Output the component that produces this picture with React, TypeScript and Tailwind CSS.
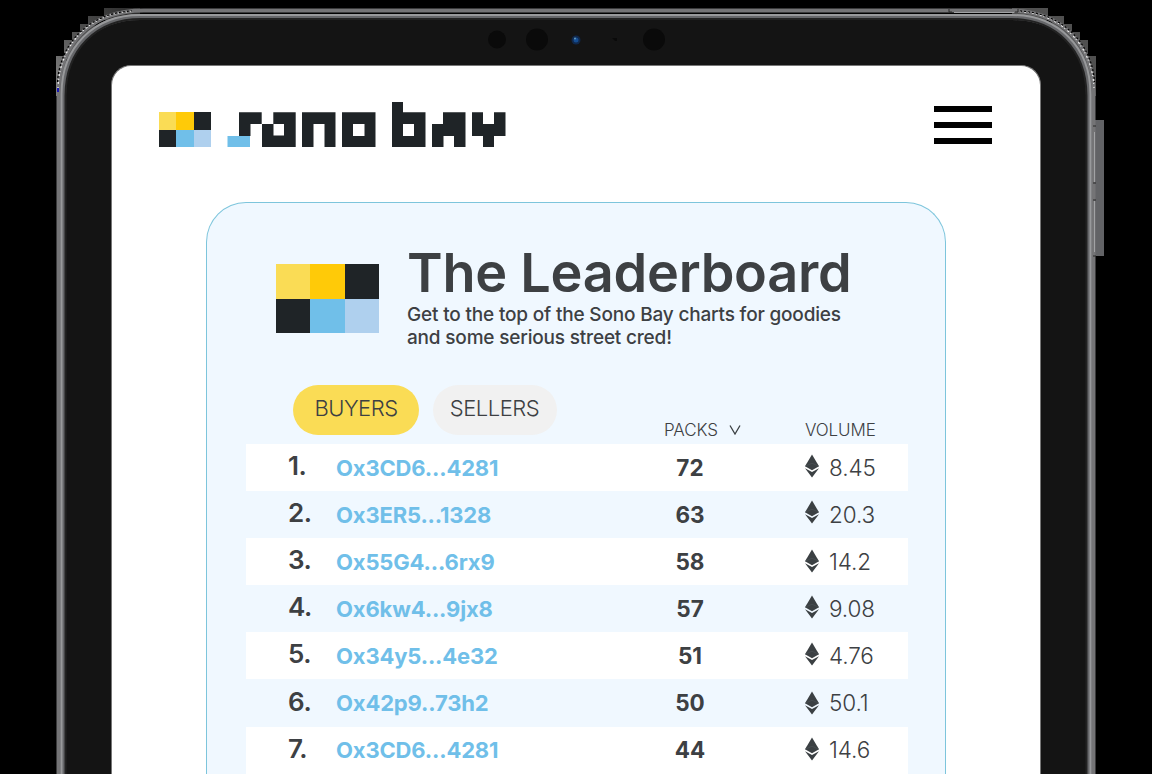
const rows = [
  { rank: "1.", address: "Ox3CD6...4281", packs: "72", volume: "8.45", iconShift: "mt-[-3px]" },
  { rank: "2.", address: "Ox3ER5...1328", packs: "63", volume: "20.3", iconShift: "mt-[-5px]" },
  { rank: "3.", address: "Ox55G4...6rx9", packs: "58", volume: "14.2", iconShift: "mt-[-1px]" },
  { rank: "4.", address: "Ox6kw4...9jx8", packs: "57", volume: "9.08", iconShift: "mt-[-3px]" },
  { rank: "5.", address: "Ox34y5...4e32", packs: "51", volume: "4.76", iconShift: "mt-[-4px]" },
  { rank: "6.", address: "Ox42p9..73h2", packs: "50", volume: "50.1", iconShift: "mt-0" },
  { rank: "7.", address: "Ox3CD6...4281", packs: "44", volume: "14.6", iconShift: "mt-[-2px]" },
];

function Mark({ className }: { className: string }) {
  return (
    <div className={`grid shrink-0 grid-cols-3 grid-rows-2 ${className}`}>
      <div className="bg-[#fadc55]" />
      <div className="bg-[#ffca08]" />
      <div className="bg-[#1f2427]" />
      <div className="bg-[#1f2427]" />
      <div className="bg-[#70bfe9]" />
      <div className="bg-[#afd0ee]" />
    </div>
  );
}

function Wordmark() {
  return (
    <svg className="ml-4 shrink-0" width="280" height="46" viewBox="0 0 280 46">
      <g fill="#1f2427" fillRule="evenodd">
        <path d="M12 10.3H34.700V22H23.500V34H12ZM34.700 22H46.300V10.3H68.700V45H35V22ZM46.500 22V33.500H57V22Z" />
        <path d="M75 10.3H108.500V45H97.500V22H86.500V45H75Z" />
        <path d="M115 10.300H148.500V45H115ZM126 22V34H137.500V22Z" />
        <path d="M165 0H176V10.300H198.500V45H165ZM176 22V34H187V22Z" />
        <path d="M216 10.300H238.500V45H227V34H216.500V45H205V22H216Z" />
        <path d="M245 10.300H256V22H267V10.300H278.500V34H267V45H256V34H245Z" />
      </g>
      <path fill="#70bfe9" d="M.500 34H23V45H.500Z" />
    </svg>
  );
}

function Ether() {
  return (
    <svg className="block" width="14" height="24" viewBox="0 0 14 24" fill="#3b4043">
      <path d="M7 .5 14 12.300 7 16.300 0 12.300Z" />
      <path d="M0 14.200 7 18 14 14.200 7 23.500Z" />
      <path d="M0 12.300 7 9.200 14 12.300" fill="none" stroke="#596065" strokeWidth=".4" />
    </svg>
  );
}

function DeviceEdge() {
  return (
    <svg className="pointer-events-none absolute left-0 top-0" width="1152" height="774" viewBox="0 0 1152 774">
      <defs>
        <linearGradient id="left-edge" x1="0" x2="1" y1="1" y2="0">
          <stop stopColor="#888" />
          <stop offset=".5" stopColor="#505050" />
          <stop offset="1" stopColor="#292929" />
        </linearGradient>
      </defs>
      <path fill="url(#left-edge)" d="M56 96V56H64V40H72V32H80V24H88V16H104V8H140V20H100L66 60V96Z" />
      <path fill="#505050" d="M1012 8H1048V16H1064V24H1072V32H1080V40H1088V56H1096V96H1080V60L1050 20H1012Z" />
      <path fill="#626366" d="M1095 120H1104V256H1095Z" />
      <path fill="none" stroke="#747476" strokeWidth="4" d="M58.500 774V94C58.500 44 90 10.500 144 10.500H1008C1062 10.500 1093.500 44 1093.500 94V774" />
      <path fill="#141414" stroke="#66676a" strokeWidth="6" d="M63 777V95C63 48 95 17 140 17H1012C1058 17 1089 48 1089 95V777Z" />
      <path fill="none" stroke="#98999b" strokeWidth="2" d="M61.500 774V94C61.500 47 94 15 140 15H1012C1058 15 1090.500 47 1090.500 94V774" />
      <path fill="none" stroke="#222" strokeWidth="2" d="M65.500 774V96C65.500 50 96 19 141 19H1011C1056 19 1086.500 50 1086.500 96V774" />
      <path fill="none" stroke="#f2f2f2" strokeWidth="1.200" strokeDasharray="1 3 2 2" d="M58 88C59.500 45 89 13 132 11.500M1020 11.500C1062 14 1092.500 46 1094 88" />
      <path fill="none" stroke="#000" strokeWidth="1.200" strokeDasharray="2 2" d="M57.500 82C60 43 89 13 132 11M1020 11C1062 13 1092 43 1094.500 82" />
      <path fill="none" stroke="#a1a2a4" strokeWidth="1" d="M954 12.500H1014M1094.500 132V182M1094.500 201V252" />
      <path fill="none" stroke="#292929" strokeWidth="1" d="M949 9V12H952M1018 9V12H1015M1093 126H1096M1093 183H1096M1093 200H1096M1093 256H1096" />
      <path fill="#1717b4" d="M57 88H59V92H57Z" />
      <g fill="#0a0a0a">
        <circle cx="497" cy="39.500" r="9" />
        <circle cx="537" cy="39.500" r="11" />
        <circle cx="654" cy="39.500" r="11" />
        <path d="M612 38H617V41H615Z" />
      </g>
      <circle cx="576" cy="40" r="4.500" fill="#10284c" />
      <circle cx="576" cy="40" r="2.500" fill="#154d91" />
      <circle cx="575" cy="38.500" r="1" fill="#6099bd" />
    </svg>
  );
}

export default function App() {
  return (
    <main className="relative h-[774px] w-[1152px] overflow-hidden bg-black pl-[111px] pt-[65px] font-['Inter',sans-serif] text-[#3d4043]">
      <DeviceEdge />
      <div className="relative h-[709px] w-[930px] overflow-hidden rounded-t-[20px] border-x border-t border-[#777] bg-white">
        <header className="flex h-[136px] items-start pl-[47px] pr-12 pt-9">
          <Mark className="mt-[10px] h-[35px] w-[52px]" />
          <Wordmark />
          <button aria-label="Menu" className="ml-auto mt-1 flex w-[58px] flex-col gap-[10px]">
            <span className="h-[6px] bg-black" />
            <span className="h-[6px] bg-black" />
            <span className="h-[6px] bg-black" />
          </button>
        </header>
        <section className="ml-[94px] h-[620px] w-[740px] rounded-t-[40px] border-[1.500px] border-b-0 border-[#7dc5dc] bg-[#f0f8ff]">
          <div className="flex h-[181px] pl-[69px] pt-[61px]">
            <Mark className="h-[69px] w-[103px]" />
            <div className="-mt-[18px] ml-7">
              <h1 className="whitespace-nowrap text-[54px] font-semibold leading-[54px] tracking-[-0.25px]">The Leaderboard</h1>
              <p className="mt-[3px] whitespace-nowrap text-[19px] font-medium leading-[23px] tracking-[-0.18px]">
                Get to the top of the Sono Bay charts for goodies
                <br />
                and some serious street cred!
              </p>
            </div>
          </div>
          <div className="flex h-[60px] items-start pl-[86px] pt-px">
            <button className="h-[50px] w-[126px] rounded-full bg-[#fadc55] pb-[3px] text-[22px] font-[350] tracking-[-0.5px]">BUYERS</button>
            <button className="ml-[14px] h-[50px] w-[124px] rounded-full bg-[#f1f1f1] pb-[3px] pr-px text-[22px] font-[350] tracking-[-0.5px]">SELLERS</button>
            <div className="ml-[107px] mt-[35px] flex w-[141px] items-center text-[17px] font-[350] leading-5">
              <span className="w-[55px] tracking-[-0.1px]">PACKS</span>
              <svg className="ml-[10px]" width="12" height="10" viewBox="0 0 12 10" fill="none" stroke="#3b4043" strokeWidth="1.300">
                <path d="m1 .5 5 8.500 5-8.500" />
              </svg>
            </div>
            <span className="mt-[35px] text-[17px] font-[350] leading-5 tracking-[-0.1px]">VOLUME</span>
          </div>
          <div className="ml-[39px] w-[662px]">
            {rows.map((row, i) => (
              <div key={row.rank} className={`flex h-[47.100px] items-center ${i % 2 === 0 ? "bg-white" : ""}`}>
                <span className="-mt-[3px] ml-[42px] w-[48px] shrink-0 text-[26px] font-semibold leading-8 tracking-[-0.4px]">{row.rank}</span>
                <span className="mt-px w-[308px] shrink-0 whitespace-nowrap text-[22px] font-bold tracking-[-0.15px] text-[#70bfe9]">{row.address}</span>
                <span className="w-[92px] shrink-0 text-center text-[22.500px] font-bold">{row.packs}</span>
                <span className={`ml-[69px] ${row.iconShift}`}><Ether /></span>
                <span className="ml-[10px] text-[22.500px] font-[350] tracking-[-0.1px]">{row.volume}</span>
              </div>
            ))}
          </div>
        </section>
      </div>
    </main>
  );
}
